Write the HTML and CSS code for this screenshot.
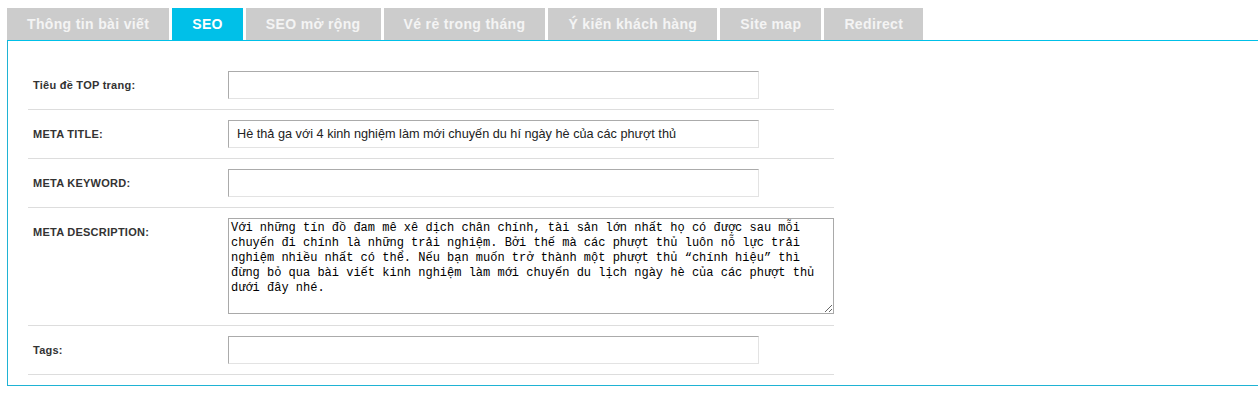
FILE: index.html
```html
<!DOCTYPE html>
<html lang="vi">
<head>
<meta charset="utf-8">
<title>SEO</title>
<link rel="stylesheet" href="styles.css">
</head>
<body>
<div class="tabs">
  <div class="tab">Thông tin bài viết</div>
  <div class="tab active">SEO</div>
  <div class="tab">SEO mở rộng</div>
  <div class="tab">Vé rẻ trong tháng</div>
  <div class="tab">Ý kiến khách hàng</div>
  <div class="tab">Site map</div>
  <div class="tab">Redirect</div>
</div>
<div class="panel">
  <div class="form">
    <div class="row">
      <label class="lbl">Tiêu đề TOP trang:</label>
      <div class="field"><input class="txt" type="text" value=""></div>
    </div>
    <div class="row">
      <label class="lbl">META TITLE:</label>
      <div class="field"><input class="txt" type="text" value="Hè thả ga với 4 kinh nghiệm làm mới chuyến du hí ngày hè của các phượt thủ"></div>
    </div>
    <div class="row">
      <label class="lbl">META KEYWORD:</label>
      <div class="field"><input class="txt" type="text" value=""></div>
    </div>
    <div class="row">
      <label class="lbl">META DESCRIPTION:</label>
      <div class="field"><textarea class="area">Với những tín đồ đam mê xê dịch chân chính, tài sản lớn nhất họ có được sau mỗi chuyến đi chính là những trải nghiệm. Bởi thế mà các phượt thủ luôn nỗ lực trải nghiệm nhiều nhất có thể. Nếu bạn muốn trở thành một phượt thủ “chính hiệu” thì đừng bỏ qua bài viết kinh nghiệm làm mới chuyến du lịch ngày hè của các phượt thủ dưới đây nhé.</textarea></div>
    </div>
    <div class="row">
      <label class="lbl">Tags:</label>
      <div class="field"><input class="txt" type="text" value=""></div>
    </div>
  </div>
</div>
</body>
</html>
```

FILE: styles.css
```css
html, body {
  margin: 0;
  padding: 0;
  background: #fff;
}
body {
  padding: 8px 0 0 7px;
  font-family: "Liberation Sans", Arial, sans-serif;
  overflow: hidden;
}
.tabs {
  display: flex;
  gap: 3px;
  height: 32px;
}
.tab {
  background: #cccccc;
  color: #f4f4f4;
  font-weight: bold;
  font-size: 14px;
  letter-spacing: 0.35px;
  line-height: 32px;
  padding: 0 20px;
  white-space: nowrap;
}
.tab.active {
  background: #00c0e8;
  color: #ffffff;
}
.panel {
  border-top: 1px solid #00c0e8;
  border-left: 1px solid #1fb3d4;
  border-bottom: 1px solid #1fb3d4;
  padding: 20px 20px 10px 20px;
}
.form {
  width: 806px;
}
.row {
  display: grid;
  grid-template-columns: 200px 1fr;
  align-items: start;
  padding: 10px 0;
  border-bottom: 1px solid #dddddd;
}
.lbl {
  padding-left: 5px;
  font-size: 11px;
  font-weight: bold;
  letter-spacing: 0.25px;
  color: #333333;
  line-height: 28px;
}
.field {
  display: flex;
}
.txt {
  box-sizing: border-box;
  width: 531px;
  height: 28px;
  margin: 0;
  padding: 0 8px;
  border: 1px solid;
  border-color: #ababab #e3e3e3 #e3e3e3 #ababab;
  font-family: "Liberation Sans", Arial, sans-serif;
  font-size: 12.7px;
  color: #222222;
  outline: none;
}
.area {
  box-sizing: border-box;
  width: 606px;
  height: 96px;
  margin: 0 0 1px 0;
  padding: 2px;
  border: 1px solid #a9a9a9;
  font-family: "Liberation Mono", "DejaVu Sans Mono", monospace;
  font-size: 12px;
  line-height: 15px;
  color: #000000;
  outline: none;
}
```
